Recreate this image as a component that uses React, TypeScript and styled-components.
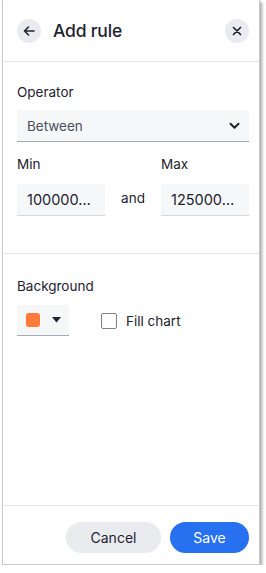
import React, { useState } from 'react';
import styled, { createGlobalStyle } from 'styled-components';

const GlobalStyle = createGlobalStyle`
  body {
    margin: 0;
    background: #ffffff;
    font-family: Inter, 'Noto Sans', sans-serif;
    color: #1d232f;
  }
`;

const Panel = styled.div`
  box-sizing: border-box;
  margin-left: 2px;
  width: 258px;
  height: 565px;
  border: 1px solid #c9c9c9;
  border-top: none;
  background: #fff;
  box-shadow: 2px 2px 3px rgba(0, 0, 0, 0.35);
  display: flex;
  flex-direction: column;
`;

const Header = styled.div`
  height: 61px;
  display: flex;
  align-items: center;
  padding: 0 10px 0 14px;
  border-bottom: 1px solid #e6e7ec;
`;

const RoundIcon = styled.button`
  width: 24px;
  height: 24px;
  border-radius: 50%;
  border: none;
  background: #eaebef;
  display: flex;
  align-items: center;
  justify-content: center;
  padding: 0;
  cursor: pointer;
`;

const Title = styled.div`
  flex: 1;
  margin-left: 12px;
  font-size: 17.5px;
  font-weight: 500;
  letter-spacing: -0.2px;
  color: #1d232f;
`;

const Section = styled.div<{ $top: number; $bottom: number; $divider?: boolean }>`
  padding: ${(p) => p.$top}px 10px ${(p) => p.$bottom}px 14px;
  border-bottom: ${(p) => (p.$divider ? '1px solid #e6e7ec' : 'none')};
  display: flex;
  flex-direction: column;
`;

const Label = styled.div`
  font-size: 13.5px;
  line-height: 18px;
  color: #1d232f;
`;

const Select = styled.div`
  box-sizing: border-box;
  margin-top: 9px;
  height: 32px;
  background: #f6f7f9;
  border-bottom: 1px solid #a6abb6;
  display: flex;
  align-items: center;
  justify-content: space-between;
  padding: 0 9px 0 10px;
  font-size: 13.5px;
  color: #4a505c;
`;

const Row = styled.div`
  display: grid;
  grid-template-columns: 88px 1fr 88px;
  margin-top: 13px;
`;

const Col = styled.div`
  display: flex;
  flex-direction: column;
`;

const Field = styled.div`
  box-sizing: border-box;
  margin-top: 11px;
  height: 32px;
  background: #f6f7f9;
  border-bottom: 1px solid #d5d8de;
  display: flex;
  align-items: center;
  padding: 0 7px 0 10px;
  font-size: 14.5px;
  color: #1d232f;
  white-space: nowrap;
  overflow: hidden;
`;

const And = styled.div`
  align-self: end;
  height: 32px;
  padding-bottom: 5px;
  box-sizing: border-box;
  display: flex;
  align-items: center;
  justify-content: center;
  font-size: 13.5px;
  color: #1d232f;
`;

const PickerRow = styled.div`
  display: flex;
  align-items: center;
  margin-top: 10px;
`;

const ColorPicker = styled.div`
  box-sizing: border-box;
  width: 52px;
  height: 31px;
  background: #f6f7f9;
  border-bottom: 1px solid #a6abb6;
  display: flex;
  align-items: center;
  padding-left: 9px;
  gap: 12px;
`;

const Swatch = styled.span<{ $color: string }>`
  width: 14px;
  height: 14px;
  border-radius: 3px;
  background: ${(p) => p.$color};
`;

const CheckLabel = styled.label`
  display: flex;
  align-items: center;
  margin-left: 32px;
  font-size: 13.5px;
  color: #1d232f;
  gap: 9px;
  cursor: pointer;
`;

const Box = styled.span<{ $checked: boolean }>`
  box-sizing: border-box;
  width: 16px;
  height: 16px;
  border: 1px solid #7c8290;
  border-radius: 2px;
  background: ${(p) => (p.$checked ? '#2770ef' : '#fff')};
`;

const Spacer = styled.div`
  flex: 1;
`;

const Footer = styled.div`
  border-top: 1px solid #e6e7ec;
  padding: 16px 10px 11px 14px;
  display: flex;
  justify-content: flex-end;
  gap: 9px;
`;

const Btn = styled.button<{ $primary?: boolean }>`
  height: 31px;
  border: none;
  border-radius: 16px;
  padding: 0;
  width: ${(p) => (p.$primary ? '79px' : '95px')};
  background: ${(p) => (p.$primary ? '#2770ef' : '#eaebef')};
  color: ${(p) => (p.$primary ? '#ffffff' : '#1d232f')};
  font-family: Inter, 'Noto Sans', sans-serif;
  font-size: 14px;
  cursor: pointer;
`;

const App = () => {
  const [fill, setFill] = useState(false);

  return (
    <>
      <GlobalStyle />
      <Panel>
        <Header>
          <RoundIcon aria-label="Back">
            <svg width="12" height="12" viewBox="0 0 12 12" fill="none">
              <path d="M11 6H1.5M5.5 2L1.5 6l4 4" stroke="#1d232f" strokeWidth="1.6" strokeLinecap="round" strokeLinejoin="round" />
            </svg>
          </RoundIcon>
          <Title>Add rule</Title>
          <RoundIcon aria-label="Close">
            <svg width="10" height="10" viewBox="0 0 10 10" fill="none">
              <path d="M1.5 1.5l7 7M8.5 1.5l-7 7" stroke="#1d232f" strokeWidth="1.7" strokeLinecap="round" />
            </svg>
          </RoundIcon>
        </Header>

        <Section $top={21} $bottom={37} $divider>
          <Label>Operator</Label>
          <Select>
            Between
            <svg width="11" height="8" viewBox="0 0 11 8" fill="none">
              <path d="M1.5 1.8l4 4 4-4" stroke="#1d232f" strokeWidth="2" strokeLinecap="round" strokeLinejoin="round" />
            </svg>
          </Select>
          <Row>
            <Col>
              <Label>Min</Label>
              <Field>100000…</Field>
            </Col>
            <And>and</And>
            <Col>
              <Label>Max</Label>
              <Field>125000…</Field>
            </Col>
          </Row>
        </Section>

        <Section $top={23} $bottom={0}>
          <Label>Background</Label>
          <PickerRow>
            <ColorPicker>
              <Swatch $color="#ff7b3a" />
              <svg width="9" height="6" viewBox="0 0 9 6">
                <path d="M0 0h9L4.5 5.5z" fill="#1d232f" />
              </svg>
            </ColorPicker>
            <CheckLabel onClick={() => setFill(!fill)}>
              <Box $checked={fill} />
              Fill chart
            </CheckLabel>
          </PickerRow>
        </Section>

        <Spacer />

        <Footer>
          <Btn>Cancel</Btn>
          <Btn $primary>Save</Btn>
        </Footer>
      </Panel>
    </>
  );
};

export default App;
